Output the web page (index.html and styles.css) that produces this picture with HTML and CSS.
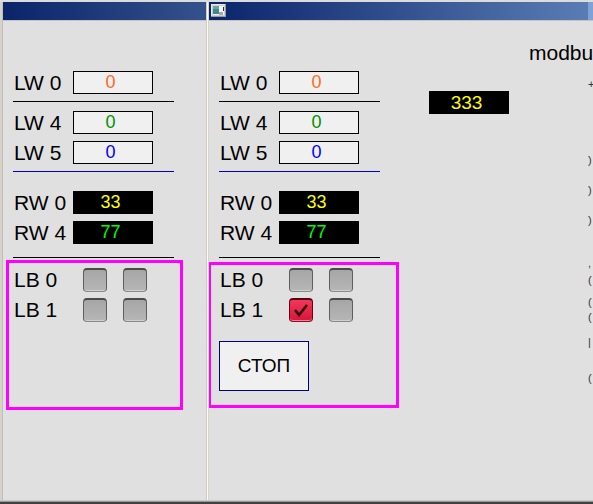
FILE: index.html
```html
<!DOCTYPE html>
<html>
<head>
<meta charset="utf-8">
<link rel="stylesheet" href="styles.css">
</head>
<body>
<div class="frame">
  <div class="top-strip"></div>
  <div class="panes">
    <section class="win win-left">
      <div class="title title-left"></div>
      <div class="title-sep"></div>
      <div class="content">
        <div class="row first"><span class="label">LW 0</span><span class="field light orange">0</span></div>
        <div class="rule black r1"></div>
        <div class="row g9"><span class="label">LW 4</span><span class="field light green">0</span></div>
        <div class="row g7"><span class="label">LW 5</span><span class="field light blue">0</span></div>
        <div class="rule blue-line r1"></div>
        <div class="row g19"><span class="label">RW 0</span><span class="field dark yellow">33</span></div>
        <div class="row g7"><span class="label">RW 4</span><span class="field dark lime">77</span></div>
        <div class="rule black r13"></div>
        <div class="group group-left">
          <div class="lb-row"><span class="lb-label">LB 0</span><span class="cb"></span><span class="cb"></span></div>
          <div class="lb-row"><span class="lb-label">LB 1</span><span class="cb"></span><span class="cb"></span></div>
        </div>
      </div>
    </section>
    <div class="divider"></div>
    <section class="win win-right">
      <div class="title title-right">
        <svg class="ticon" width="15" height="13" viewBox="0 0 15 13">
          <rect x="0" y="0" width="15" height="13" fill="#9a9a9a"/>
          <rect x="0" y="0" width="14" height="12" fill="#e8e8e8"/>
          <rect x="1" y="1" width="13" height="11" fill="#d0d0d0"/>
          <rect x="2" y="2" width="11" height="9" fill="#f4f4f4"/>
          <rect x="2" y="2" width="6" height="8" fill="#3f8a86"/>
          <rect x="2" y="2" width="6" height="3" fill="#6aa6a0"/>
          <rect x="8" y="8" width="4" height="3" fill="#a8a8a8"/>
          <rect x="12" y="3" width="1" height="4" fill="#203040"/>
        </svg>
      </div>
      <div class="title-sep"></div>
      <div class="content canvas">
        <div class="col-a">
          <div class="row first"><span class="label">LW 0</span><span class="field light orange">0</span></div>
          <div class="rule black r1"></div>
          <div class="row g9"><span class="label">LW 4</span><span class="field light green">0</span></div>
          <div class="row g7"><span class="label">LW 5</span><span class="field light blue">0</span></div>
          <div class="rule blue-line r1"></div>
          <div class="row g19"><span class="label">RW 0</span><span class="field dark yellow">33</span></div>
          <div class="row g7"><span class="label">RW 4</span><span class="field dark lime">77</span></div>
          <div class="rule black r13"></div>
          <div class="group group-right">
            <div class="lb-row"><span class="lb-label">LB 0</span><span class="cb"></span><span class="cb"></span></div>
            <div class="lb-row"><span class="lb-label">LB 1</span><span class="cb checked"><svg width="22" height="21" viewBox="0 0 22 21"><polyline points="5,10 9,15 17,5" fill="none" stroke="#2a0008" stroke-width="2.4"/></svg></span><span class="cb"></span></div>
            <button class="stop">СТОП</button>
          </div>
        </div>
        <div class="col-b">
          <span class="field dark yellow big">333</span>
        </div>
        <div class="col-c">
          <div class="modbus">modbu</div>
          <span class="frag m14">+</span>
          <span class="frag m64">)</span>
          <span class="frag m18">)</span>
          <span class="frag m18">)</span>
          <span class="frag m31">,</span>
          <span class="frag m5">(</span>
          <span class="frag m10">(</span>
          <span class="frag m3">(</span>
          <span class="frag m13">|</span>
          <span class="frag m24">(</span>
        </div>
      </div>
    </section>
  </div>
  <div class="bottom-light"></div>
  <div class="bottom-mid"></div>
  <div class="bottom-dark"></div>
</div>
</body>
</html>
```
FILE: styles.css
```css
html, body {
  margin: 0;
  padding: 0;
}
body {
  width: 593px;
  height: 504px;
  overflow: hidden;
  background: #e0e0e0;
  font-family: "Liberation Sans", Arial, sans-serif;
  color: #000;
}
.frame {
  display: flex;
  flex-direction: column;
  width: 593px;
  height: 504px;
}
.top-strip {
  height: 2px;
  background: #dcdcdc;
  flex: none;
}
.panes {
  display: flex;
  height: 498px;
  flex: none;
  border-left: 2px solid #d6d2ca;
  box-shadow: inset 1px 0 0 #c2beb6;
  padding-left: 1px;
}
.win {
  display: flex;
  flex-direction: column;
  overflow: hidden;
}
.win-left {
  width: 203px;
  flex: none;
}
.win-right {
  flex: 1;
  min-width: 0;
}
.divider {
  width: 1px;
  flex: none;
  background: #fbfbf8;
  border-left: 1px solid #cfcbc2;
  border-right: 1px solid #d8d4cc;
}
.title {
  height: 18px;
  flex: none;
  position: relative;
}
.title-left {
  background: linear-gradient(90deg, #0a246a 0%, #34528c 100%);
}
.title-right {
  background: linear-gradient(90deg, #0a246a 0px, #5a7cb4 379px, #7fa2d6 379px, #7fa2d6 100%);
}
.ticon {
  display: block;
  margin: 2px 0 0 2px;
}
.title-sep {
  height: 1px;
  background: #c4c4c4;
  flex: none;
}
.content {
  flex: 1;
  min-height: 0;
}
.canvas {
  display: flex;
  align-items: flex-start;
  overflow: hidden;
}
.col-a {
  width: 190px;
  flex: none;
}
.col-b {
  flex: none;
  margin-left: 30px;
  padding-top: 70px;
}
.col-c {
  flex: none;
  margin-left: 20px;
  padding-top: 20px;
  display: flex;
  flex-direction: column;
  align-items: flex-start;
  white-space: nowrap;
}
.row {
  display: flex;
  align-items: center;
  height: 23px;
  margin-left: 11px;
}
.row.first { margin-top: 50px; }
.row.g9 { margin-top: 9px; }
.row.g7 { margin-top: 7px; }
.row.g19 { margin-top: 19px; }
.label {
  width: 59px;
  font-size: 21px;
  line-height: 23px;
  flex: none;
}
.field {
  display: block;
  width: 80px;
  height: 23px;
  box-sizing: border-box;
  text-align: center;
  font-size: 18px;
  line-height: 21px;
  padding-right: 5px;
  flex: none;
}
.field.light {
  border: 1px solid #000;
  background: #f0f0f0;
}
.field.dark {
  background: #000;
  border: 1px solid #000;
}
.field.big {
  font-size: 19px;
}
.orange { color: #ff6a24; }
.green { color: #009000; }
.blue { color: #0000ff; }
.yellow { color: #ffff00; }
.lime { color: #00ff00; }
.rule {
  width: 161px;
  height: 1px;
  margin-left: 10px;
}
.rule.black { background: #000; }
.rule.blue-line { background: #0000c8; }
.rule.r1 { margin-top: 7px; }
.rule.r13 { margin-top: 13px; }
.group {
  box-sizing: border-box;
  border: 3px solid #ff00ff;
}
.group-left {
  margin-top: 2px;
  margin-left: 3px;
  width: 177px;
  height: 150px;
  padding: 5px 0 0 5px;
}
.group-right {
  margin-top: 4px;
  margin-left: -1px;
  width: 191px;
  height: 146px;
  padding: 3px 0 0 9px;
}
.lb-row {
  display: flex;
  align-items: center;
  height: 24px;
  margin-bottom: 6px;
}
.lb-label {
  width: 69px;
  font-size: 21px;
  line-height: 24px;
  flex: none;
}
.cb {
  width: 24px;
  height: 24px;
  box-sizing: border-box;
  margin-right: 16px;
  border-radius: 4px;
  border-top: 2px solid #4a4a4a;
  border-left: 1px solid #5e5e5e;
  border-right: 1px solid #5e5e5e;
  border-bottom: 1px solid #8a8a8a;
  background: linear-gradient(#a6a6a6, #b6b6b6);
  box-shadow: inset 0 -1px 0 #d0d0d0;
  flex: none;
  display: flex;
  align-items: center;
  justify-content: center;
}
.cb.checked {
  border-top: 2px solid #5a0010;
  border-left: 1px solid #6a0018;
  border-right: 1px solid #6a0018;
  border-bottom: 1px solid #8a1028;
  background: linear-gradient(#f2385a, #d8143a);
  box-shadow: inset 0 -1px 0 #f08098;
}
.cb svg { display: block; }
.stop {
  display: block;
  margin: 19px 0 0 -1px;
  width: 90px;
  height: 50px;
  box-sizing: border-box;
  border: 1px solid #000080;
  background: #f0f0f0;
  font-family: "Liberation Sans", Arial, sans-serif;
  font-size: 19px;
  color: #000;
  padding: 0;
}
.modbus {
  font-size: 21px;
  line-height: 23px;
}
.frag {
  display: block;
  margin-left: 59px;
  height: 12px;
  font-size: 11px;
  line-height: 12px;
  color: #333;
}
.m14 { margin-top: 14px; }
.m64 { margin-top: 64px; }
.m18 { margin-top: 18px; }
.m31 { margin-top: 31px; }
.m5 { margin-top: 5px; }
.m10 { margin-top: 10px; }
.m3 { margin-top: 3px; }
.m13 { margin-top: 13px; }
.m24 { margin-top: 24px; }
.bottom-light {
  height: 1px;
  background: #c8c8c8;
  flex: none;
}
.bottom-mid {
  height: 1px;
  background: #9a9a9a;
  flex: none;
}
.bottom-dark {
  height: 2px;
  background: #404040;
  flex: none;
}
```
